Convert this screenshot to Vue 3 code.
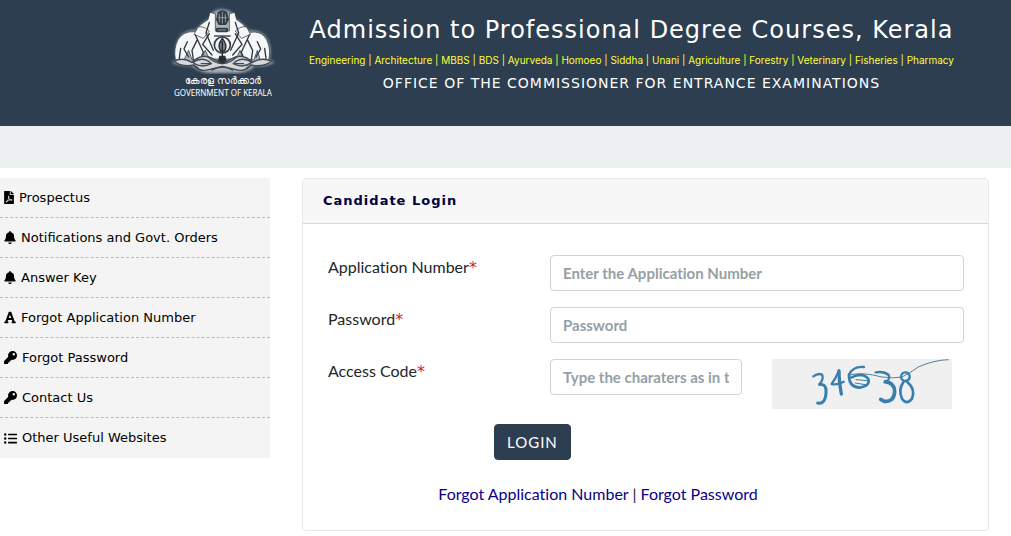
<script setup>
const menu = [
  { icon: 'pdf', label: 'Prospectus', width: 10, box: '0 0 384 512' },
  { icon: 'bell', label: 'Notifications and Govt. Orders', width: 12, box: '0 0 448 512' },
  { icon: 'bell', label: 'Answer Key', width: 12, box: '0 0 448 512' },
  { icon: 'font', label: 'Forgot Application Number', width: 12, box: '0 0 448 512' },
  { icon: 'key', label: 'Forgot Password', width: 13, box: '0 0 512 512' },
  { icon: 'key', label: 'Contact Us', width: 13, box: '0 0 512 512' },
  { icon: 'list', label: 'Other Useful Websites', width: 13, box: '0 0 512 512' },
]
const paths = {
  pdf: 'M182 250c-5-16-5-47-2-47 9 0 8 37 2 47zm-2 47c-8 20-17 43-28 62 18-7 39-17 62-22-12-9-24-22-34-40zM86 428c0 1 13-5 35-40-7 6-29 25-35 40zM248 160h136v328c0 13-11 24-24 24H24c-13 0-24-11-24-24V24C0 11 11 0 24 0h200v136c0 13 11 24 24 24zm-8 172c-20-12-33-29-43-54 5-19 12-48 6-66-4-29-42-26-47-6-5 19 0 45 8 78-12 28-29 65-41 86-23 12-54 30-59 53-4 18 30 64 88-37 26-9 54-19 79-23 22 12 47 19 64 19 29 0 32-32 21-44-14-13-54-9-76-6zM377 105L279 7c-4-5-10-7-17-7h-6v128h128v-6c0-6-3-12-7-17zm-74 250c16-7 44 11 14 11-18 0-14-11-14-11z',
  bell: 'M224 512c35 0 64-29 64-64H160c0 35 29 64 64 64zm215-150c-19-20-55-52-55-154 0-78-54-140-128-155V32a32 32 0 0 0-64 0v21C118 68 64 130 64 208c0 102-36 134-55 154-6 7-9 14-9 22 0 16 13 32 32 32h384c19 0 32-16 32-32 0-8-3-15-9-22z',
  font: 'M432 416h-23L278 53a32 32 0 0 0-30-21h-48a32 32 0 0 0-30 21L39 416H16a16 16 0 0 0-16 16v32c0 9 7 16 16 16h128c9 0 16-7 16-16v-32c0-9-7-16-16-16h-20l23-64h154l23 64h-20c-9 0-16 7-16 16v32c0 9 7 16 16 16h128c9 0 16-7 16-16v-32c0-9-7-16-16-16zM177 272l47-129 47 129z',
  key: 'M512 176c0 97-79 176-176 176-11 0-22-1-33-3l-24 27a24 24 0 0 1-18 8h-37v40c0 13-11 24-24 24h-40v40c0 13-11 24-24 24H24c-13 0-24-11-24-24v-78c0-6 3-12 7-17l162-162A176 176 0 1 1 512 176zm-176-48a48 48 0 1 0 96 0 48 48 0 1 0-96 0z',
  list: 'M48 48a48 48 0 1 0 0 96 48 48 0 0 0 0-96zm0 160a48 48 0 1 0 0 96 48 48 0 0 0 0-96zm0 160a48 48 0 1 0 0 96 48 48 0 0 0 0-96zM176 64h320c9 0 16 7 16 16v32c0 9-7 16-16 16H176c-9 0-16-7-16-16V80c0-9 7-16 16-16zm0 160h320c9 0 16 7 16 16v32c0 9-7 16-16 16H176c-9 0-16-7-16-16v-32c0-9 7-16 16-16zm0 160h320c9 0 16 7 16 16v32c0 9-7 16-16 16H176c-9 0-16-7-16-16v-32c0-9 7-16 16-16z',
}
</script>

<template>
  <header class="masthead">
    <figure class="emblem">
      <svg width="110" height="68" viewBox="24 17 330 204" role="img" aria-label="Kerala state emblem">
        <defs>
          <filter id="glow" x="-10%" y="-10%" width="120%" height="120%"><feGaussianBlur stdDeviation="5" /></filter>
        </defs>
        <path d="M158 36Q186 18 214 36L226 56Q246 66 266 92Q306 88 322 118Q338 148 326 180L344 186Q318 200 284 196Q268 216 230 218H146Q112 212 96 196Q60 198 36 186L52 178Q40 148 54 118Q70 90 108 90Q128 66 148 56Z" fill="#aab3bc" filter="url(#glow)" />
        <g fill="#f5f6f7" stroke="#252b31" stroke-width="2" stroke-linejoin="round">
          <path d="M150 36L166 40V92H208V40L224 36L230 58Q252 70 268 96Q306 90 320 118Q334 148 326 180L302 182L292 150L282 178L252 180L240 150L228 176H148L136 150L122 180L96 178L86 150L70 182L46 178Q40 144 54 118Q70 92 104 94Q120 70 144 58Z" />
          <path d="M114 80Q132 76 148 92L130 114L102 102ZM260 80Q242 76 226 92L244 114L272 102Z" />
        </g>
        <g fill="none" stroke="#30363c" stroke-width="4" stroke-linecap="round">
          <path d="M148 66L138 98L160 150M226 66L236 98L212 150M106 104L130 156L120 180M268 104L244 156L254 180M82 124L72 146L86 170M292 124L302 146L288 170M62 144L58 174M314 144L318 174M112 118L96 150L100 178M262 118L278 150L274 178" />
          <path d="M148 100L128 132L156 164M226 100L246 132L218 164" />
        </g>
        <g fill="#333b43">
          <path d="M173 36Q187 24 202 36L207 58L198 74H176L168 58Z" />
          <rect x="168" y="82" width="36" height="14" rx="4" />
          <rect x="162" y="105" width="50" height="4" />
        </g>
        <g fill="none" stroke="#b7bfc7" stroke-width="2">
          <path d="M178 40V66M187 34V70M196 40V66M174 52H201M174 89H198" />
        </g>
        <circle cx="187" cy="134" r="24" fill="#eef0f2" stroke="#343c44" stroke-width="5" />
        <path d="M187 114Q170 136 182 152H194Q204 134 187 114ZM187 122V168" fill="#76818b" stroke="#20272e" stroke-width="4" />
        <g fill="#d5d9dd" stroke="#404952" stroke-width="4">
          <path d="M42 182Q70 170 96 186Q130 154 164 178L187 190L210 178Q244 154 278 186Q304 170 334 182Q310 202 272 194Q256 216 228 208L187 198L146 208Q118 216 102 194Q66 202 42 182Z" />
          <path d="M98 186Q130 166 154 190Q124 206 98 186ZM276 186Q244 166 220 190Q250 206 276 186ZM142 168Q164 190 187 190Q210 190 232 168" fill="none" />
          <path d="M122 190H150M224 190H252M154 210Q187 190 220 210M116 204L100 194M258 204L274 194" fill="none" />
        </g>
        <path d="M178 166H196L200 182L187 190L174 182Z" fill="#262e36" />
      </svg>
      <figcaption>
        <span class="native" lang="ml">കേരള സർക്കാർ</span>
        <span>GOVERNMENT OF KERALA</span>
      </figcaption>
    </figure>
    <div class="titles">
      <h1>Admission to Professional Degree Courses, Kerala</h1>
      <p class="courses">Engineering | Architecture | MBBS | BDS | Ayurveda | Homoeo | Siddha | Unani | Agriculture | Forestry | Veterinary | Fisheries | Pharmacy</p>
      <p class="office">OFFICE OF THE COMMISSIONER FOR ENTRANCE EXAMINATIONS</p>
    </div>
  </header>
  <div class="band"></div>

  <div class="content">
    <nav class="side" aria-label="Main">
      <a v-for="item in menu" :key="item.label" href="#">
        <svg :width="item.width" height="13" :viewBox="item.box" aria-hidden="true"><path :d="paths[item.icon]" fill-rule="evenodd" /></svg>
        <span>{{ item.label }}</span>
      </a>
    </nav>

    <main class="card">
      <h2>Candidate Login</h2>
      <form @submit.prevent>
        <div class="row">
          <label for="appno">Application Number<span class="req">*</span></label>
          <input id="appno" type="text" placeholder="Enter the Application Number">
        </div>
        <div class="row">
          <label for="pwd">Password<span class="req">*</span></label>
          <input id="pwd" type="password" placeholder="Password">
        </div>
        <div class="row last">
          <label for="code">Access Code<span class="req">*</span></label>
          <div class="access">
            <input id="code" type="text" placeholder="Type the charaters as in the image">
            <svg class="captcha" width="180" height="50" viewBox="0 0 540 150" role="img" aria-label="Access code image">
              <g fill="none" stroke="#397fae" stroke-linecap="round" stroke-linejoin="round">
                <path d="M124 52Q139 41 150 47Q157 58 142 77" stroke-width="7" />
                <path d="M143 76Q165 76 162 101Q160 137 137 132" stroke-width="9" />
                <path d="M201 34Q192 57 179 75Q196 79 215 68" stroke-width="7" />
                <path d="M201 36Q201 66 208 105" stroke-width="10" />
                <path d="M276 24Q244 20 231 47" stroke-width="7" />
                <path d="M231 47Q230 84 263 86Q295 81 289 60Q273 38 239 55" stroke-width="8" />
                <path d="M250 50H278M252 62L288 65M250 72L285 78" stroke-width="3" />
                <path d="M311 40Q335 36 350 48Q357 61 338 70" stroke-width="7" />
                <path d="M340 68Q368 72 368 98Q366 130 337 127L326 121" stroke-width="11" />
                <circle cx="400" cy="53" r="13" stroke-width="7" stroke-dasharray="15 3" />
                <path d="M394 70Q378 92 390 119Q404 140 420 119Q432 90 405 68" stroke-width="8" />
              </g>
              <path d="M232 48Q270 38 330 54Q365 59 390 54Q414 42 439 24Q486 3 530 2" fill="none" stroke="#5281a2" stroke-width="3" />
            </svg>
          </div>
        </div>
        <div class="actions"><button type="submit">LOGIN</button></div>
        <p class="help"><a href="#">Forgot Application Number</a> | <a href="#">Forgot Password</a></p>
      </form>
    </main>
  </div>
</template>

<style>
body {
  margin: 0;
  background: #fff;
}
</style>

<style scoped>
* {
  box-sizing: border-box;
}
.masthead {
  display: flex;
  align-items: flex-start;
  gap: 31px;
  min-height: 126px;
  padding: 6px 20px 0 168px;
  background: #2c3e50;
  color: #fff;
  font-family: "DejaVu Sans", sans-serif;
}
.emblem {
  flex: none;
  width: 110px;
  margin: 0;
}
.emblem svg {
  display: block;
}
figcaption {
  display: flex;
  flex-direction: column;
  align-items: center;
  font: 8px/11px "Noto Sans", sans-serif;
  white-space: nowrap;
}
.native {
  font-size: 10px;
  line-height: 13px;
}
.titles {
  text-align: center;
  white-space: nowrap;
}
h1 {
  margin: 8px 0 0;
  font-size: 24px;
  font-weight: 400;
  line-height: 32px;
  letter-spacing: 1px;
}
p {
  margin: 0;
}
.courses {
  margin-top: 6px;
  color: #ff3;
  font: 10px/16px Inter, sans-serif;
}
.office {
  margin-top: 5px;
  font-size: 14px;
  line-height: 20px;
  letter-spacing: 1px;
}
.band {
  height: 42px;
  background: #ecf0f1;
}
.content {
  display: grid;
  grid-template-columns: 270px 1fr;
  align-items: start;
  gap: 32px;
  padding: 10px 22px 5px 0;
}
.side {
  background: #f4f4f4;
  font: 13px/20px "DejaVu Sans", sans-serif;
}
.side a {
  display: flex;
  align-items: center;
  gap: 5px;
  height: 40px;
  padding-left: 4px;
  border-bottom: 1px dashed #bbb;
  color: #000;
  text-decoration: none;
}
.side a:last-child {
  border-bottom: 0;
}
.card {
  border: 1px solid #e8e8e8;
  border-radius: 4px;
  font: 16px/24px Lato, sans-serif;
  font-variant-ligatures: none;
  color: #212529;
}
h2 {
  margin: 0;
  padding: 11px 20px;
  border-bottom: 1px solid #d8d8d8;
  background: #f7f7f7;
  color: #000040;
  font: bold 13px/22px "DejaVu Sans", sans-serif;
  letter-spacing: 1px;
}
form {
  padding: 31px 24px 24px 25px;
}
.row {
  display: grid;
  grid-template-columns: 222px 1fr;
  align-items: start;
  margin-bottom: 16px;
}
.row.last {
  margin-bottom: 15px;
}
.req {
  color: #dc2030;
  font-family: "DejaVu Sans", sans-serif;
  line-height: 20px;
}
input {
  width: 100%;
  height: 36px;
  padding: 0 12px;
  border: 1px solid #ced4da;
  border-radius: 4px;
  background: #fff;
  color: #495057;
  font: bold 15px/22px Lato, sans-serif;
  font-variant-ligatures: none;
}
input::placeholder {
  color: #95a0a6;
  opacity: 1;
}
.access {
  display: flex;
  gap: 30px;
}
.access input {
  width: 192px;
}
.captcha {
  display: block;
  flex: none;
  background: #f0f0f0;
}
.actions {
  display: flex;
  padding-left: 166px;
}
button {
  height: 36px;
  padding: 0 12px;
  border: 1px solid #2c3e50;
  border-radius: 4px;
  background: #2c3e50;
  color: #fff;
  font: 15px/24px Lato, sans-serif;
  letter-spacing: 1px;
}
.help {
  margin-top: 22px;
  padding-right: 96px;
  text-align: center;
}
.help a {
  color: #0c0088;
  text-decoration: none;
}
</style>
